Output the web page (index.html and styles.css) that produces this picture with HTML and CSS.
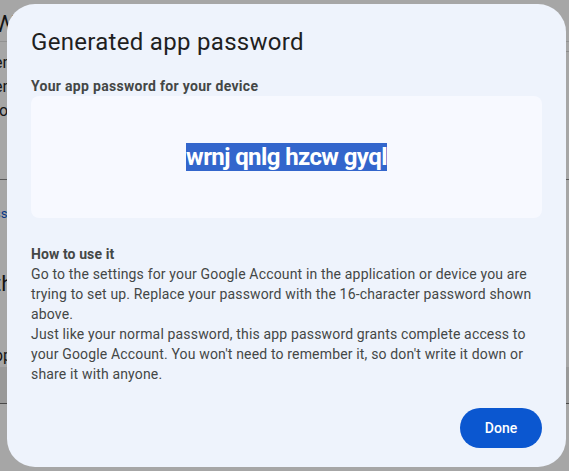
FILE: index.html
```html
<!DOCTYPE html>
<html lang="en">
<head>
<meta charset="utf-8">
<title>Generated app password</title>
<link rel="stylesheet" href="styles.css">
</head>
<body>
<div class="page">
  <div class="page-head">Wi</div>
  <div class="page-text">
    <div class="pline">en</div>
    <div class="pline">en</div>
    <div class="pline">to</div>
  </div>
  <div class="page-sec">
    <div class="pline link">ss</div>
    <div class="pline big">th</div>
    <div class="pline">pp</div>
  </div>
  <div class="page-band"></div>
</div>
<div class="right-line"></div>
<div class="scrim"></div>

<div class="dialog" role="dialog" aria-labelledby="dlg-title">
  <h1 class="dlg-title" id="dlg-title">Generated app password</h1>
  <div class="label">Your app password for your device</div>
  <div class="pw-box"><span class="pw">wrnj qnlg hzcw gyql</span></div>
  <div class="howto">
    <div class="howto-head">How to use it</div>
    <div class="howto-text">Go to the settings for your Google Account in the application or device you are trying to set up. Replace your password with the 16-character password shown above.</div>
    <div class="howto-text">Just like your normal password, this app password grants complete access to your Google Account. You won't need to remember it, so don't write it down or share it with anyone.</div>
  </div>
  <div class="actions"><button class="done">Done</button></div>
</div>
</body>
</html>
```

FILE: styles.css
```css
html, body {
  margin: 0;
  padding: 0;
  background: #ffffff;
  overflow: hidden;
  height: 471px;
}

body {
  font-family: Roboto, "Liberation Sans", sans-serif;
  color: #1f1f1f;
}

.page {
  margin-left: -6px;
  width: 600px;
}

.page-head {
  height: 42px;
  line-height: 48px;
  font-size: 24px;
  border-bottom: 1px solid #e0e0e0;
  box-sizing: border-box;
}

.page-text {
  padding-top: 9px;
  height: 138px;
  border-bottom: 1px solid #8a8a8a;
  box-sizing: border-box;
}

.pline {
  font-size: 16px;
  line-height: 24px;
  height: 24px;
}

.page-sec {
  padding-top: 22px;
  height: 187px;
  box-sizing: border-box;
}

.page-sec .link {
  font-size: 13px;
  color: #0b57d0;
  height: 70px;
}

.page-sec .big {
  font-size: 22px;
  height: 72px;
}

.page-band {
  height: 36px;
  background: #ececec;
  border-bottom: 1px solid #707070;
}

.right-line {
  position: absolute;
  right: 0;
  top: 51px;
  width: 10px;
  height: 1px;
  background: #d8d8d8;
}

.scrim {
  position: fixed;
  inset: 0;
  background: rgba(0, 0, 0, 0.35);
}

.dialog {
  position: fixed;
  left: 7px;
  top: 4px;
  width: 559px;
  height: 463px;
  box-sizing: border-box;
  padding: 22px 24px 0 24px;
  background: #eef3fc;
  border-radius: 28px;
  display: flex;
  flex-direction: column;
}

.dlg-title {
  margin: 0;
  font-size: 24px;
  line-height: 32px;
  font-weight: 400;
  letter-spacing: 0.3px;
  color: #1f1f1f;
}

.label {
  margin-top: 18px;
  font-size: 14px;
  line-height: 20px;
  font-weight: 700;
  letter-spacing: 0.3px;
  color: #444746;
}

.pw-box {
  height: 122px;
  background: #f7f9ff;
  border-radius: 8px;
  display: flex;
  align-items: center;
  justify-content: center;
}

.pw {
  font-size: 24px;
  font-weight: 700;
  letter-spacing: -0.6px;
  color: #ffffff;
  background: #3366cc;
  line-height: 28px;
}

.howto {
  margin-top: 26px;
  font-size: 14px;
  line-height: 20px;
  letter-spacing: 0.16px;
  color: #444746;
}

.howto-head {
  font-weight: 700;
  letter-spacing: 0.1px;
}

.actions {
  margin-top: 24px;
  display: flex;
  justify-content: flex-end;
}

.done {
  width: 82px;
  height: 40px;
  border: none;
  border-radius: 20px;
  background: #0b57d0;
  color: #ffffff;
  font-family: Roboto, "Liberation Sans", sans-serif;
  font-size: 14px;
  font-weight: 500;
  padding: 0;
}
```
